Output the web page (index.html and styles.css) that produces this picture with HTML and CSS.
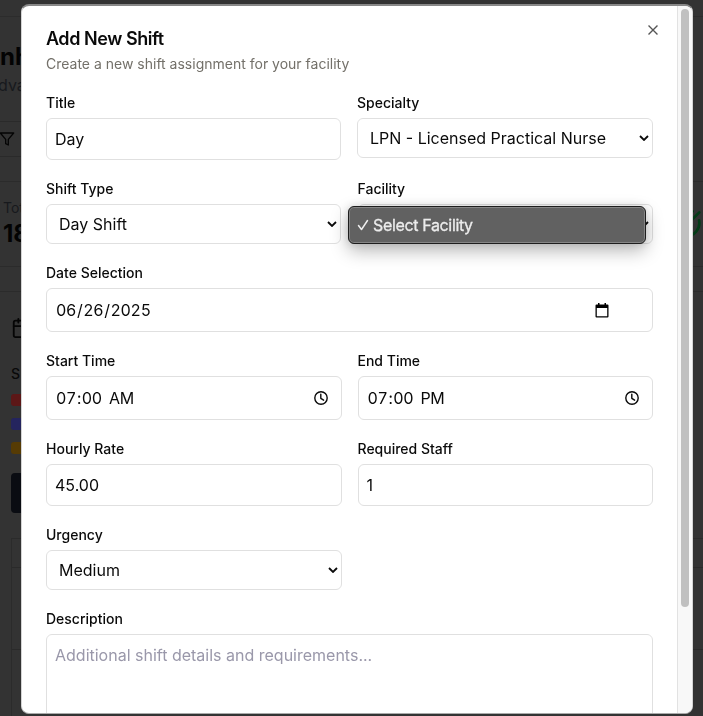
FILE: index.html
```html
<!DOCTYPE html>
<html lang="en">
<head>
<meta charset="utf-8">
<title>Add New Shift</title>
<link rel="stylesheet" href="styles.css">
</head>
<body>
<div class="page">
  <div class="topbar"></div>
  <div class="intro">
    <div class="page-title">nh</div>
    <div class="page-sub">dva</div>
    <div class="filter"><svg width="16" height="16" viewBox="0 0 24 24"><path d="M22 3H2l8 9.500V19l4 2v-8.500z"/></svg></div>
  </div>
  <div class="stats">
    <div><div class="stat-label">Tot</div><div class="stat-value">18</div></div>
    <svg class="check" width="32" height="32" viewBox="0 0 24 24"><path d="M21.800 10A10 10 0 1 1 17 3.300"/><path d="m9 11 3 3L22 4"/></svg>
  </div>
  <div class="calendar">
    <svg class="cal-icon" width="22" height="22" viewBox="0 0 24 24"><path d="M8 2v4M16 2v4M3 10h18"/><rect x="3" y="4" width="18" height="18" rx="2"/></svg>
    <div class="legend-title">S</div>
    <div class="swatch red"></div>
    <div class="swatch blue"></div>
    <div class="swatch gold"></div>
    <div class="dark-button"></div>
    <div class="table"><div class="row head"></div><div class="row"></div><div class="row"></div></div>
  </div>
</div>

<div class="modal">
  <div class="content">
    <svg class="close" width="16" height="16" viewBox="0 0 24 24"><path d="M18 6 6 18M6 6l12 12"/></svg>
    <h1>Add New Shift</h1>
    <p class="subtitle">Create a new shift assignment for your facility</p>
    <div class="form">
      <div class="field lead"><label>Title</label><div class="control input">Day</div></div>
      <div class="field trail"><label>Specialty</label><div class="control select"><span>LPN - Licensed Practical Nurse</span><svg class="chevron" width="10" height="6" viewBox="0 0 10 6"><path d="m1 1 4 4 4-4"/></svg></div></div>
      <div class="field lead"><label>Shift Type</label><div class="control select"><span>Day Shift</span><svg class="chevron" width="10" height="6" viewBox="0 0 10 6"><path d="m1 1 4 4 4-4"/></svg></div></div>
      <div class="field"><label>Facility</label><div class="control select"><span></span><svg class="chevron" width="10" height="6" viewBox="0 0 10 6"><path d="m1 1 4 4 4-4"/></svg>
        <div class="menu"><svg width="12" height="12" viewBox="0 0 12 12"><path d="m1.500 6.500 3 4 6-9"/></svg><span>Select Facility</span></div></div></div>
      <div class="field wide"><label>Date Selection</label><div class="control date"><span class="digits">06<i>/</i>26<i>/</i>2025</span><svg class="date-icon" width="14" height="15" viewBox="0 0 14 15"><path d="M3 0h1.500v2H3zM9.500 0H11v2H9.500z"/><path fill-rule="evenodd" d="M1.500 1.500h11a1 1 0 0 1 1 1v11a1 1 0 0 1-1 1h-11a1 1 0 0 1-1-1v-11a1 1 0 0 1 1-1zM1.800 5v8.200h10.400V5z"/></svg></div></div>
      <div class="field"><label>Start Time</label><div class="control time"><span class="digits">07<i>:</i>00<b>AM</b></span><svg class="clock" width="14" height="14" viewBox="0 0 14 14"><circle cx="7" cy="7" r="6.200"/><path d="M6.800 3.300v4l2.800 1.900"/></svg></div></div>
      <div class="field"><label>End Time</label><div class="control time"><span class="digits">07<i>:</i>00<b>PM</b></span><svg class="clock" width="14" height="14" viewBox="0 0 14 14"><circle cx="7" cy="7" r="6.200"/><path d="M6.800 3.300v4l2.800 1.900"/></svg></div></div>
      <div class="field"><label>Hourly Rate</label><div class="control input">45.00</div></div>
      <div class="field"><label>Required Staff</label><div class="control input">1</div></div>
      <div class="field"><label>Urgency</label><div class="control select"><span>Medium</span><svg class="chevron" width="10" height="6" viewBox="0 0 10 6"><path d="m1 1 4 4 4-4"/></svg></div></div>
      <div class="field wide"><label>Description</label><div class="control area">Additional shift details and requirements...</div></div>
    </div>
  </div>
  <div class="scrollbar"><div class="thumb"></div></div>
</div>
</body>
</html>
```
FILE: styles.css
```css
* { box-sizing: border-box; }
body { margin: 0; height: 716px; overflow: hidden; background: #333; color: #0a0a0a; font-family: Inter, sans-serif; }
svg { flex: none; fill: none; stroke: currentColor; stroke-width: 2; stroke-linecap: round; stroke-linejoin: round; }

.page { height: 716px; overflow: hidden; }
.topbar { height: 17px; border-bottom: 1px solid #2c2c2c; }
.intro { height: 164px; padding-top: 24px; }
.page-title { height: 32px; font-size: 24px; line-height: 32px; font-weight: 700; color: #030303; }
.page-sub { margin: 0 0 0 -2px; height: 24px; font-size: 16px; line-height: 24px; color: #17191d; }
.filter { width: 100px; height: 36px; margin-top: 24px; border: solid #2a2a2a; border-width: 1px 0; display: flex; align-items: center; color: #050505; }
.filter svg { margin-left: -1px; }
.stats { height: 86px; border: solid #2b2b2b; border-width: 1px 0; padding: 16px 0 0 3px; display: flex; justify-content: space-between; }
.stat-label { font-size: 14px; line-height: 20px; color: #17191d; }
.stat-value { font-size: 24px; line-height: 32px; font-weight: 700; color: #030303; }
.check { margin: 9px 1px 0 0; color: #043c17; }
.calendar { margin-top: 24px; border-top: 1px solid #2b2b2b; padding: 25px 0 0 11px; display: flex; flex-direction: column; }
.cal-icon { color: #050505; }
.legend-title { margin: 25px 0 10px; font-size: 14px; line-height: 20px; font-weight: 500; color: #090909; }
.swatch { width: 16px; height: 12px; margin-bottom: 12px; border-radius: 3px; }
.red { background: #5c1717; }
.blue { background: #24245e; }
.gold { background: #563b04; }
.dark-button { width: 80px; height: 40px; margin-top: 7px; border-radius: 4px; background: #0a0c12; }
.table { margin-top: 25px; border: 1px solid #2b2b2b; border-right: 0; }
.row { height: 82px; border-bottom: 1px solid #2a2a2a; }
.head { height: 29px; }

.modal { position: fixed; left: 21px; top: 4px; width: 672px; height: 710px; display: flex; overflow: hidden; border: 1px solid #d4d4d4; border-top: 2px solid #888; border-bottom-color: #aaa; border-radius: 8px; background: #fff; }
.content { position: relative; flex: 1; min-width: 0; padding: 20px 24px 0; }
.close { position: absolute; top: 16px; right: 16px; color: #555; stroke-linecap: square; }
h1 { margin: 0; font-size: 18px; line-height: 25px; font-weight: 600; letter-spacing: -0.45px; }
.subtitle { margin: 3px 0 0; height: 34px; font-size: 14px; line-height: 20px; color: #737069; }
.form { display: grid; grid-template-columns: 1fr 1fr; gap: 14px 16px; align-items: start; }
.wide { grid-column: 1 / -1; }
.lead { margin-right: .5px; }
.trail { margin-left: -.5px; }
label { display: block; height: 30px; font-size: 14px; line-height: 30px; font-weight: 500; }
.control { position: relative; display: flex; align-items: center; justify-content: space-between; border: 1px solid #e0e0e0; border-radius: 6px; font-size: 16px; line-height: 24px; }
.input { height: 42px; padding: 0 8px; }
.select { height: 40px; padding: 0 3px 0 12px; }
.chevron { stroke-width: 1.800; stroke-linecap: butt; stroke-linejoin: miter; }
.date, .time { height: 44px; padding: 0 13px 0 9px; }
.date { padding-right: 43px; }
.digits { font-variant-numeric: tabular-nums; letter-spacing: -.3px; }
.digits i { font-style: normal; padding: 0 .8px; }
.digits b { font-weight: 400; padding-left: 7px; }
.date-icon { fill: #000; stroke: none; }
.clock { stroke-width: 1.400; }
.area { height: 100px; align-items: flex-start; padding: 8px; color: #9a98aa; }
.menu { position: absolute; z-index: 2; left: -10.500px; top: 1px; width: 298px; height: 38px; padding-left: 8px; display: flex; align-items: center; gap: 4px; letter-spacing: -.35px; border: 1px solid #1d1d1d; border-radius: 6px; background: #616161; color: #ececec; box-shadow: inset 0 0 0 1px #858585, 0 7px 18px rgba(0, 0, 0, .28), 0 0 8px rgba(0, 0, 0, .12); -webkit-text-stroke: .3px #ececec; }
.menu svg { stroke-width: 1.500; }
.scrollbar { width: 15px; padding: 3px 3px 0 3px; border-left: 1px solid #e2e2e2; background: #f8f8f8; }
.thumb { width: 8px; height: 598px; border-radius: 4px; background: #c0c0c0; }
```
